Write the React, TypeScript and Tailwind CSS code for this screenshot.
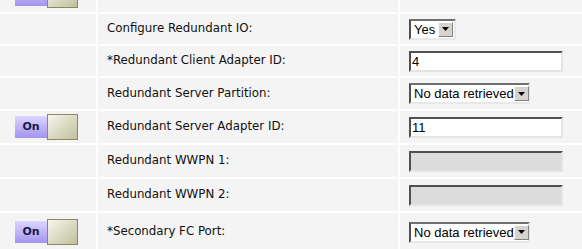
import React from "react";

const Toggle = ({ text = true }: { text?: boolean }) => (
  <div className="flex items-center pl-[15px]">
    <div className="w-[32px] h-[22px] bg-gradient-to-b from-[#dcd6ff] to-[#a393ee] flex items-center justify-center text-[11px] font-bold text-[#1a1a4a] [font-family:'DejaVu_Sans',sans-serif]">
      {text ? "On" : null}
    </div>
    <div className="w-[31px] h-[26px] border border-[#8a8a60] bg-gradient-to-br from-[#f6f6ee] to-[#c0c09c]" />
  </div>
);

const Select = ({ value, w }: { value: string; w: string }) => (
  <div
    className={`${w} h-[21px] flex items-center justify-between bg-white border-2 border-t-[#707070] border-l-[#505050] border-b-[#e8e8e8] border-r-[#e8e8e8] [font-family:'Liberation_Sans',Arial,sans-serif] text-[13px] text-black whitespace-nowrap`}
  >
    <span className="pl-[3px] leading-none whitespace-nowrap">{value}</span>
    <div className="w-[15px] h-[15px] shrink-0 mr-[1px] bg-[#d6d3ce] border border-t-white border-l-white border-b-[#808080] border-r-[#808080] flex items-center justify-center">
      <svg width="7" height="4" viewBox="0 0 7 4">
        <path d="M0 0h7L3.5 4z" fill="#000" />
      </svg>
    </div>
  </div>
);

const Input = ({ value, disabled }: { value?: string; disabled?: boolean }) => (
  <div
    className={`w-[154px] h-[21px] flex items-center border-2 border-t-[#505050] border-l-[#505050] border-b-[#e4e4e4] border-r-[#e4e4e4] ${
      disabled ? "bg-[#dcdcdc]" : "bg-white"
    } [font-family:'Liberation_Sans',Arial,sans-serif] text-[13px] text-black`}
  >
    <span className="pl-[1px] leading-none">{value}</span>
  </div>
);

type Row = {
  h: string;
  toggle?: boolean;
  label?: string;
  control?: React.ReactNode;
};

const rows: Row[] = [
  { h: "h-[35px]", toggle: true },
  { h: "h-[32px]", label: "Configure Redundant IO:", control: <Select value="Yes" w="w-[47px]" /> },
  { h: "h-[32px]", label: "*Redundant Client Adapter ID:", control: <Input value="4" /> },
  { h: "h-[33px]", label: "Redundant Server Partition:", control: <Select value="No data retrieved" w="w-[121px]" /> },
  { h: "h-[34px]", toggle: true, label: "Redundant Server Adapter ID:", control: <Input value="11" /> },
  { h: "h-[34px]", label: "Redundant WWPN 1:", control: <Input disabled /> },
  { h: "h-[34px]", label: "Redundant WWPN 2:", control: <Input disabled /> },
  { h: "h-[40px]", toggle: true, label: "*Secondary FC Port:", control: <Select value="No data retrieved" w="w-[121px]" /> },
];

export default function App() {
  return (
    <div className="w-[582px] h-[249px] overflow-hidden bg-white">
      <div className="-mt-[23px] flex flex-col">
        {rows.map((r, i) => (
          <div
            key={i}
            className={`${r.h} grid grid-cols-[98px_302px_1fr] ${i > 0 ? "border-t-2 border-white" : ""}`}
          >
            <div className="bg-[#f4f4f4] flex items-center border-r-2 border-white">
              {r.toggle && <Toggle text={i > 0} />}
            </div>
            <div className="bg-[#f4f4f4] flex items-center border-r-2 border-white pl-[9px] text-[11.8px] text-[#111] whitespace-nowrap [font-family:'DejaVu_Sans',Verdana,sans-serif]">
              {r.label}
            </div>
            <div className="bg-[#f4f4f4] flex items-center pl-[9px]">{r.control}</div>
          </div>
        ))}
      </div>
    </div>
  );
}
